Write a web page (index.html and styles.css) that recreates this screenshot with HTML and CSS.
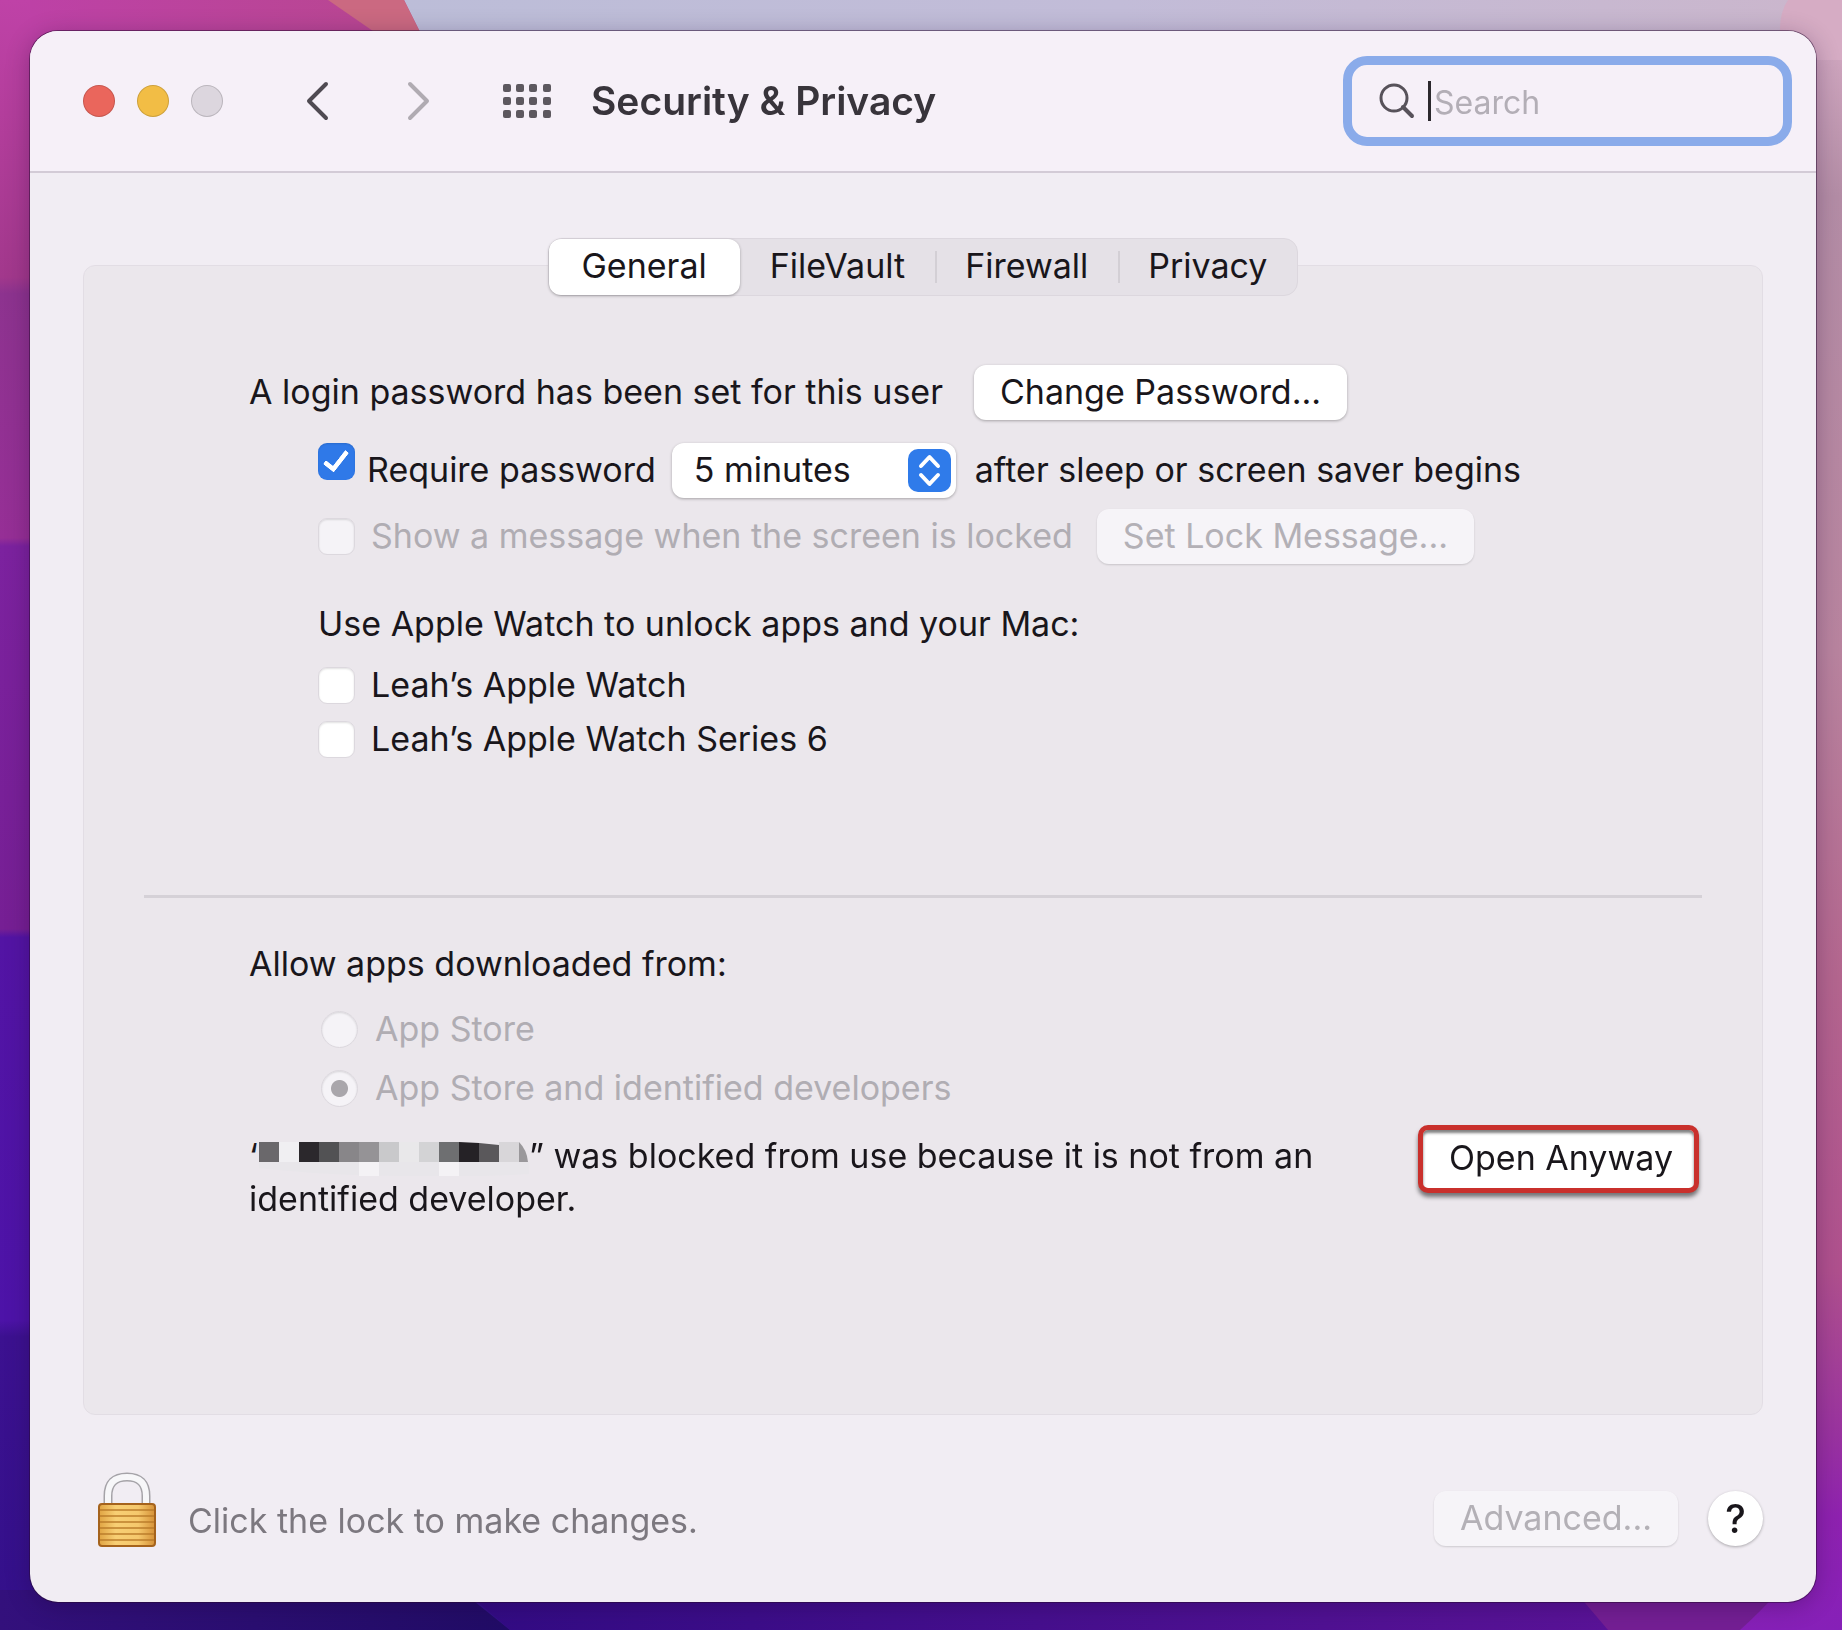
FILE: index.html
```html
<!DOCTYPE html>
<html lang="en">
<head>
  <meta charset="UTF-8" />
  <meta name="viewport" content="width=device-width, initial-scale=1.0"/>
  <title>Security &amp; Privacy</title>
  <link rel="stylesheet" href="styles.css">
</head>
<body>

<!-- Desktop wallpaper -->
<svg class="wallpaper" viewBox="0 0 1842 1630" preserveAspectRatio="none" aria-hidden="true">
  <defs>
    <linearGradient id="left" x1="0" y1="0" x2="0" y2="1">
      <stop offset="0" stop-color="#bf42a7"/>
      <stop offset="0.17" stop-color="#a2388c"/>
      <stop offset="0.18" stop-color="#8d338f"/>
      <stop offset="0.33" stop-color="#962f96"/>
      <stop offset="0.335" stop-color="#7c229f"/>
      <stop offset="0.57" stop-color="#761f94"/>
      <stop offset="0.575" stop-color="#5314a4"/>
      <stop offset="0.81" stop-color="#4d13a8"/>
      <stop offset="0.82" stop-color="#3c1190"/>
      <stop offset="1" stop-color="#33108a"/>
    </linearGradient>
    <linearGradient id="right" x1="0" y1="0" x2="0" y2="1">
      <stop offset="0" stop-color="#d9afc8"/>
      <stop offset="0.12" stop-color="#b48da6"/>
      <stop offset="0.4" stop-color="#b9849f"/>
      <stop offset="0.6" stop-color="#b4668f"/>
      <stop offset="0.78" stop-color="#b0508e"/>
      <stop offset="0.88" stop-color="#9a33a0"/>
      <stop offset="0.93" stop-color="#8f22b0"/>
      <stop offset="1" stop-color="#8620b8"/>
    </linearGradient>
    <linearGradient id="sky" x1="0" y1="0" x2="1" y2="0">
      <stop offset="0" stop-color="#bcbdd8"/>
      <stop offset="0.5" stop-color="#c2bcd8"/>
      <stop offset="1" stop-color="#cbb6cc"/>
    </linearGradient>
    <linearGradient id="plum" x1="0" y1="0" x2="1" y2="0">
      <stop offset="0" stop-color="#bd41a6"/>
      <stop offset="1" stop-color="#b8478f"/>
    </linearGradient>
    <linearGradient id="floor" x1="0" y1="0" x2="1" y2="0">
      <stop offset="0" stop-color="#33107c"/>
      <stop offset="1" stop-color="#210c66"/>
    </linearGradient>
    <linearGradient id="violet" x1="0" y1="0" x2="1" y2="0">
      <stop offset="0" stop-color="#320b84"/>
      <stop offset="1" stop-color="#5a1398"/>
    </linearGradient>
  </defs>
  <rect width="921" height="1630" fill="url(#left)"/>
  <rect x="921" width="921" height="1630" fill="url(#right)"/>
  <path d="M400 0H1842V60H430z" fill="url(#sky)"/>
  <path d="M30 0H404L424 40H30z" fill="url(#plum)"/>
  <path d="M328 0H404L424 40H386z" fill="#cb6981"/>
  <path d="M1788 0H1842V60H1784Q1774 20 1788 0z" fill="#d6acc4"/>
  <path d="M0 1590H460L510 1630H0z" fill="url(#floor)"/>
  <path d="M464 1590H1590L1612 1630H510z" fill="url(#violet)"/>
  <path d="M1574 1590H1780Q1760 1612 1740 1630H1608z" fill="#741f94"/>
</svg>

<main class="window">
  <header class="toolbar">
    <div class="lights">
      <button class="light red" aria-label="Close"></button>
      <button class="light yellow" aria-label="Minimize"></button>
      <button class="light gray" aria-label="Zoom" disabled></button>
    </div>
    <div class="nav-buttons">
      <button class="icon-btn" aria-label="Back">
        <svg width="24" height="40" viewBox="0 0 24 40"><path d="M21 3L4 20L21 37" fill="none" stroke="#4f4a52" stroke-width="4" stroke-linecap="round" stroke-linejoin="round"/></svg>
      </button>
      <button class="icon-btn" aria-label="Forward" disabled>
        <svg width="24" height="40" viewBox="0 0 24 40"><path d="M3 3L20 20L3 37" fill="none" stroke="#b0abb2" stroke-width="4" stroke-linecap="round" stroke-linejoin="round"/></svg>
      </button>
    </div>
    <button class="icon-btn" aria-label="Show All">
      <svg width="48" height="36" viewBox="0 0 48 36" fill="#5d585f">
        <rect x="0" y="1" width="8" height="8" rx="2"/><rect x="13" y="1" width="8" height="8" rx="2"/><rect x="26" y="1" width="8" height="8" rx="2"/><rect x="40" y="1" width="8" height="8" rx="2"/>
        <rect x="0" y="14" width="8" height="8" rx="2"/><rect x="13" y="14" width="8" height="8" rx="2"/><rect x="26" y="14" width="8" height="8" rx="2"/><rect x="40" y="14" width="8" height="8" rx="2"/>
        <rect x="0" y="27" width="8" height="8" rx="2"/><rect x="13" y="27" width="8" height="8" rx="2"/><rect x="26" y="27" width="8" height="8" rx="2"/><rect x="40" y="27" width="8" height="8" rx="2"/>
      </svg>
    </button>
    <h1>Security &amp; Privacy</h1>
    <label class="search">
      <svg width="36" height="36" viewBox="0 0 36 36" fill="none" stroke="#57525a" stroke-width="3" stroke-linecap="round"><circle cx="15" cy="15" r="13"/><path d="M24 24L33 33" stroke-width="4"/></svg>
      <span class="caret"></span>
      <input type="text" placeholder="Search" aria-label="Search">
    </label>
  </header>

  <div class="content">
    <nav class="tabs">
      <button class="tab active">General</button>
      <button class="tab">FileVault</button>
      <button class="tab">Firewall</button>
      <button class="tab">Privacy</button>
    </nav>

    <section class="panel">
      <div class="login">
        <div class="row first">
          <span>A login password has been set for this user</span>
          <button class="btn">Change Password...</button>
        </div>
        <div class="row indent require">
          <input type="checkbox" id="require" checked>
          <label for="require">Require password</label>
          <div class="select">
            <select aria-label="Password delay">
              <option>5 minutes</option>
            </select>
            <svg width="43" height="43" viewBox="0 0 43 43"><rect width="43" height="43" rx="10" fill="#2f7bea"/><path d="M13 17L21.500 8L30 17M13 26L21.500 35L30 26" fill="none" stroke="#fff" stroke-width="4" stroke-linecap="round" stroke-linejoin="round"/></svg>
          </div>
          <span>after sleep or screen saver begins</span>
        </div>
        <div class="row indent message">
          <input type="checkbox" id="message" disabled>
          <label for="message">Show a message when the screen is locked</label>
          <button class="btn" disabled>Set Lock Message...</button>
        </div>
        <p class="indent watch-title">Use Apple Watch to unlock apps and your Mac:</p>
        <div class="row indent watch">
          <input type="checkbox" id="watch1">
          <label for="watch1">Leah’s Apple Watch</label>
        </div>
        <div class="row indent watch">
          <input type="checkbox" id="watch2">
          <label for="watch2">Leah’s Apple Watch Series 6</label>
        </div>
      </div>

      <hr>

      <div class="allow">
        <p>Allow apps downloaded from:</p>
        <div class="row indent source">
          <input type="radio" name="source" id="store" disabled>
          <label for="store">App Store</label>
        </div>
        <div class="row indent source">
          <input type="radio" name="source" id="identified" checked disabled>
          <label for="identified">App Store and identified developers</label>
        </div>
        <div class="blocked">
          <p>‘<svg class="mosaic" width="270" height="34" viewBox="0 0 270 34" aria-hidden="true">
            <path d="M0 20H270V32Q200 36 140 34Q70 34 0 26z" fill="#e8e6ea"/>
            <path d="M100 20h20v14h-20zM180 20h20v14h-20z" fill="#f4f2f5"/>
            <rect width="20" height="20" fill="#6a686b"/>
            <rect x="20" width="20" height="20" fill="#f0eff2"/>
            <rect x="40" width="20" height="20" fill="#2b282c"/>
            <rect x="60" width="20" height="20" fill="#525254"/>
            <rect x="80" width="20" height="20" fill="#888689"/>
            <rect x="100" width="20" height="20" fill="#959396"/>
            <rect x="120" width="20" height="20" fill="#c9c9cb"/>
            <rect x="140" width="20" height="20" fill="#e9e8ea"/>
            <rect x="160" width="20" height="20" fill="#d3d3d5"/>
            <rect x="180" width="20" height="20" fill="#6e6f71"/>
            <path d="M200 0L220 1V20H200z" fill="#252226"/>
            <path d="M220 1L240 3V20H220z" fill="#5a585b"/>
            <rect x="240" width="20" height="20" fill="#d8d6d9"/>
            <path d="M260 0Q268 8 269 20H260z" fill="#9a989b"/>
          </svg>” was blocked from use because it is not from an identified developer.</p>
          <button class="btn highlight">Open Anyway</button>
        </div>
      </div>
    </section>

    <footer>
      <button class="icon-btn" aria-label="Unlock">
        <svg width="60" height="76" viewBox="0 0 60 76">
          <defs>
            <linearGradient id="gold" x1="0" y1="0" x2="1" y2="0">
              <stop offset="0" stop-color="#e0a443"/>
              <stop offset="0.3" stop-color="#f8cf74"/>
              <stop offset="0.7" stop-color="#f5c86c"/>
              <stop offset="1" stop-color="#d69238"/>
            </linearGradient>
          </defs>
          <path d="M11 34V24Q11 5 30 5Q49 5 49 24V34" fill="none" stroke="#a5a3a8" stroke-width="9"/>
          <path d="M11 34V24Q11 5 30 5Q49 5 49 24V34" fill="none" stroke="#f7f7f9" stroke-width="6"/>
          <rect x="2" y="32" width="56" height="42" rx="3" fill="url(#gold)" stroke="#a5631c" stroke-width="2"/>
          <path d="M3 38H57M3 44H57M3 50H57M3 56H57M3 62H57M3 68H57" stroke="#b97a28" stroke-width="2" opacity="0.7"/>
        </svg>
      </button>
      <span class="hint">Click the lock to make changes.</span>
      <button class="btn" disabled>Advanced...</button>
      <button class="help" aria-label="Help">?</button>
    </footer>
  </div>
</main>

</body>
</html>
```

FILE: styles.css
```css
* { box-sizing: border-box; }
body {
  margin: 0;
  min-height: 100vh;
  padding: 31px 26px 28px 30px;
  display: flex;
  background: #8422a0;
  font-family: Inter, 'Liberation Sans', sans-serif;
  font-size: 34px;
  line-height: 43px;
  color: #19161b;
}
button, input, select { font: inherit; color: inherit; margin: 0; }
p { margin: 0; }

.wallpaper {
  position: fixed;
  top: 0;
  left: 0;
  width: 100%;
  height: 100%;
  z-index: -1;
}

.window {
  flex: 1;
  display: flex;
  flex-direction: column;
  background: #f1edf3;
  border-radius: 28px;
  overflow: hidden;
  box-shadow: 0 0 0 1px rgba(40,10,50,0.5), 0 4px 24px rgba(30,0,50,0.3);
}

/* Toolbar */
.toolbar {
  display: flex;
  align-items: center;
  height: 142px;
  padding: 0 24px 0 53px;
  background: #f6f0f8;
  border-bottom: 2px solid #d3cbd6;
}
.lights { display: flex; gap: 22px; margin-right: 82px; }
.light {
  width: 32px;
  height: 32px;
  padding: 0;
  border: 1px solid rgba(0,0,0,0.15);
  border-radius: 50%;
}
.red { background: #ea665c; }
.yellow { background: #f2bd45; }
.gray { background: #dcd6de; }
.nav-buttons { display: flex; gap: 78px; margin-right: 72px; }
.icon-btn {
  display: flex;
  padding: 0;
  border: none;
  background: none;
}
h1 {
  margin: 0 auto 2px 40px;
  font-size: 39px;
  font-weight: 600;
  color: #38343b;
}
.search {
  display: flex;
  align-items: center;
  width: 449px;
  height: 90px;
  padding: 0 27px;
  border: 9px solid #8aabea;
  border-radius: 24px;
}
.caret { width: 3px; height: 40px; margin: 0 3px 0 13px; background: #2b282d; }
.search input {
  flex: 1;
  min-width: 0;
  padding: 2px 0 0;
  border: none;
  outline: none;
  background: none;
  font-size: 32px;
}
.search input::placeholder { color: #b3aeb6; opacity: 1; }

/* Tabs sit over the top edge of the panel */
.content {
  flex: 1;
  display: flex;
  flex-direction: column;
  padding: 65px 53px 54px;
}
.tabs {
  position: relative;
  z-index: 1;
  display: flex;
  align-self: center;
  height: 58px;
  margin-bottom: -31px;
  background: #e5e1e7;
  border: 1px solid #dcd7de;
  border-radius: 14px;
}
.tab {
  position: relative;
  padding: 0 30px 3px;
  border: none;
  border-radius: 12px;
  background: none;
}
.tab.active { padding: 0 33px 3px; background: #fff; box-shadow: 0 1px 3px rgba(0,0,0,0.3); }
.tab + .tab + .tab::before {
  content: "";
  position: absolute;
  left: 0;
  top: 12px;
  width: 2px;
  height: 32px;
  background: #d3cfd5;
}

/* Panel */
.panel {
  flex: 1;
  padding: 99px 60px 0;
  background: #ebe7ec;
  border: 1px solid #e2dde4;
  border-radius: 12px;
}
.login, .allow { padding-left: 105px; }
.row { display: flex; align-items: center; }
.row > span, .row > label { padding-bottom: 2px; }
.indent { margin-left: 69px; }
.btn {
  height: 55px;
  padding: 0 26px 2px;
  border: none;
  border-radius: 12px;
  background: #fff;
  box-shadow: 0 1px 3px rgba(0,0,0,0.3);
  white-space: nowrap;
}
.btn:disabled {
  background: #f6f4f8;
  color: #b3b0b6;
  box-shadow: 0 1px 2px rgba(0,0,0,0.15);
}
.first { gap: 31px; }
.require { height: 56px; margin-top: 22px; }
.require input { align-self: flex-start; margin-top: 1px; }
.require label { margin: 0 16px 0 12px; }
.message { height: 56px; margin-top: 10px; }
.message label { margin: 0 24px 0 16px; }
.watch-title { margin-top: 38px; }
.watch { height: 54px; }
.watch label { margin-left: 16px; }
.watch-title + .watch { margin-top: 13px; }

input[type="checkbox"], input[type="radio"] {
  appearance: none;
  flex: none;
  width: 37px;
  height: 37px;
  border: 1px solid #dcd8de;
  border-radius: 9px;
  background: #fff;
  box-shadow: inset 0 1px 2px rgba(0,0,0,0.12);
}
input[type="checkbox"]:checked {
  position: relative;
  border: none;
  background: #2f79e8;
}
input[type="checkbox"]:checked::after {
  content: "";
  position: absolute;
  left: 11px;
  top: 3px;
  width: 9px;
  height: 20px;
  border: solid #fff;
  border-width: 0 5px 5px 0;
  border-radius: 2px;
  transform: rotate(38deg);
}
input[type="radio"] { border-radius: 50%; }
input:disabled { background: #f5f3f7; }
input:disabled + label { color: #b0adb3; }
input[type="radio"]:checked { background: radial-gradient(circle, #a9a6ab 8px, #f5f3f7 9px); }

.select { position: relative; margin-right: 19px; }
select {
  display: block;
  appearance: none;
  width: 284px;
  height: 55px;
  padding: 0 22px 2px;
  border: none;
  border-radius: 12px;
  background: #fff;
  box-shadow: 0 1px 3px rgba(0,0,0,0.3);
}
.select svg { position: absolute; right: 5px; top: 6px; pointer-events: none; }

hr {
  margin: 129px 0 44px;
  border: none;
  border-top: 3px solid #d5d1d7;
}

.allow .source { height: 59px; margin-left: 72px; }
.allow p + .source { margin-top: 15px; }
.source label { margin-left: 17px; }
.blocked {
  display: flex;
  justify-content: space-between;
  align-items: flex-start;
  margin: 7px 3px 0 0;
}
.blocked p { flex: 0 1 1090px; margin-top: 9px; }
.mosaic { margin-left: 1px; vertical-align: -8px; }
.highlight {
  height: 68px;
  padding: 0 21px 3px 26px;
  border: 5px solid #c9302c;
  border-radius: 10px;
  box-shadow: 0 4px 4px rgba(0,0,0,0.5), inset 0 3px 3px rgba(0,0,0,0.5);
}

/* Footer */
footer {
  display: flex;
  align-items: flex-end;
  padding: 57px 0 0 14px;
}
footer .btn, .help { margin-bottom: 2px; }
.hint { margin: 0 auto 6px 31px; color: #7c787f; }
.help {
  width: 55px;
  height: 55px;
  margin-left: 30px;
  padding: 0;
  border: none;
  border-radius: 50%;
  background: #fff;
  box-shadow: 0 1px 3px rgba(0,0,0,0.3);
  font-size: 39px;
  font-weight: 500;
}
```
